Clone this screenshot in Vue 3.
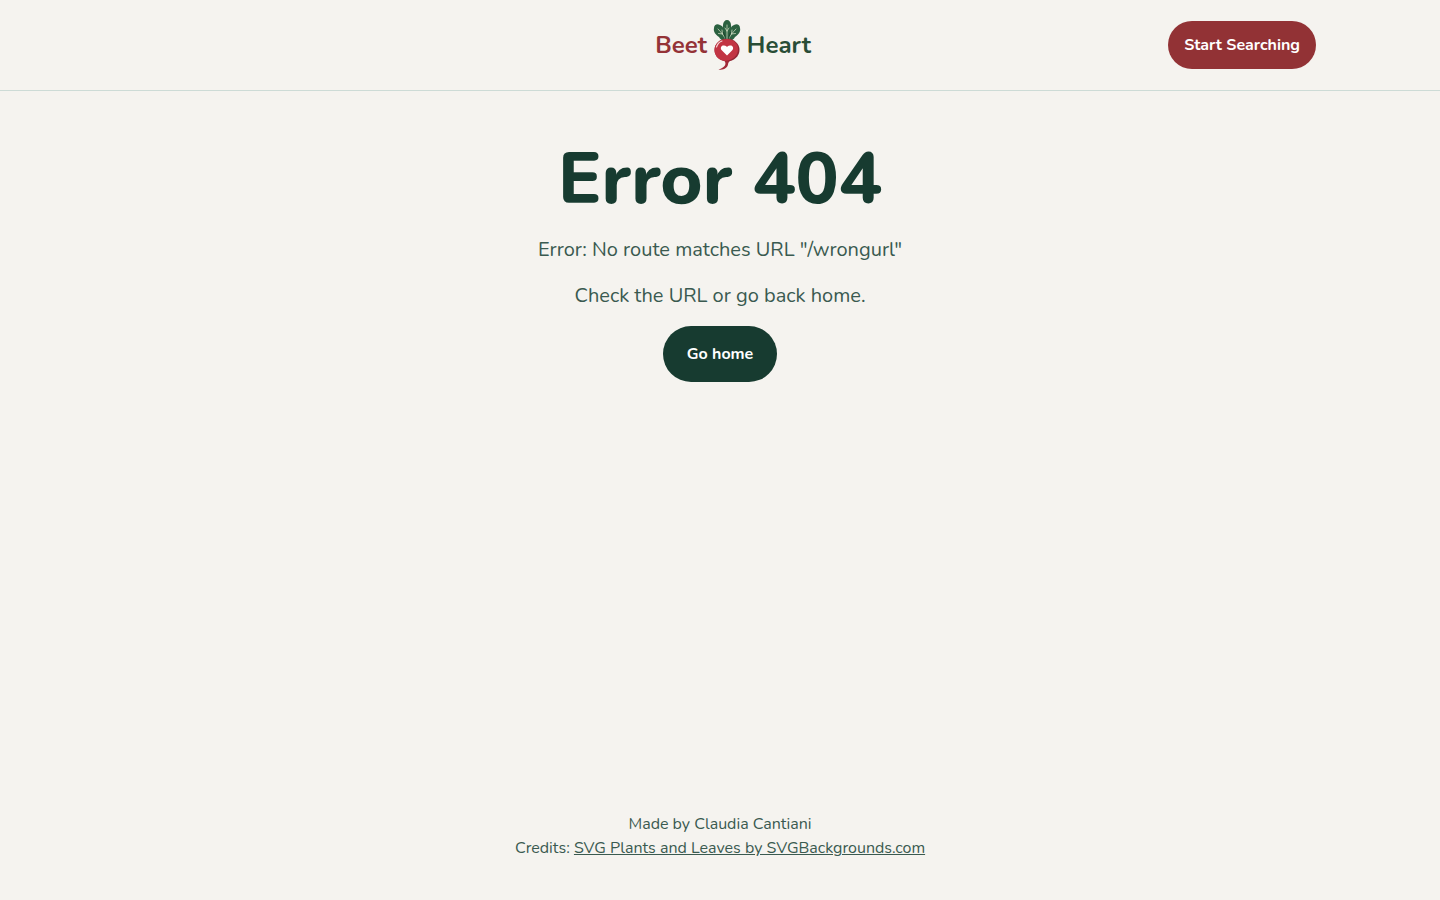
<script setup>
const attemptedPath = '/wrongurl'
</script>

<template>
  <div class="page">
    <header class="header">
      <div class="bar">
        <a class="logo" href="/" aria-label="Beet Heart">
          <span class="beet">Beet</span>
          <svg class="mark" viewBox="0 0 28 50" aria-hidden="true">
            <g fill="#2c6140">
              <path d="M13 21C9 21 7 19 6 17C3 15 0 12 1 8C1 5 4 3 7 5C10 6 11 9 11 11C13 14 14 18 13 21Z" />
              <path d="M15 21C19 21 21 19 22 17C25 15 28 12 27 8C27 5 24 3 21 5C18 6 17 9 17 11C15 14 14 18 15 21Z" />
              <path d="M14 21C11 17 9 12 10 5C10 2 12 0 14 0C16 0 18 2 18 5C19 12 17 17 14 21Z" />
            </g>
            <path d="M14 5V21M14 11L12 8M14 11L16 8M13 20C11 16 9 13 5 9M9.500 14L9 10M9.500 14L5.500 13.500M15 20C17 16 19 13 23 9M18.500 14L19 10M18.500 14L22.500 13.500" fill="none" stroke="#dce5cb" stroke-width=".7" stroke-linecap="round" />
            <path d="M10.500 12C11.500 15 12.500 18 13 21M17.500 12C16.500 15 15.500 18 15 21" fill="none" stroke="#173b28" stroke-width=".8" />
            <path d="M10 40C14 42 13.500 47.500 5.500 49.500C11 50.500 14.500 47.500 15 44.500C15.300 42.500 16 41 19 40Z" fill="#a12a39" />
            <ellipse cx="14" cy="30" rx="12.500" ry="11.200" fill="#922735" />
            <path d="M14 19C20 19 25 23 25 29C25 36 20 40 12 41C5.500 40 1.500 36 1.500 30C1.500 23.500 7 19 14 19Z" fill="#c23443" />
            <path d="M3.500 27C4.500 24 6 22 9 21" fill="none" stroke="#f5d9d8" stroke-width="1.100" stroke-linecap="round" />
            <path d="M14 35.500L9 30.500C6.500 28 8.500 25 11 25.500C13 25.500 14 27 14 27C14 27 15 25.500 17 25.500C19.500 25 21.500 28 19 30.500Z" fill="#fff" />
          </svg>
          <span class="heart">Heart</span>
        </a>
        <a class="button search" href="/search">Start Searching</a>
      </div>
    </header>

    <main class="content">
      <h1>Error 404</h1>
      <p>Error: No route matches URL "{{ attemptedPath }}"</p>
      <p>Check the URL or go back home.</p>
      <a class="button home" href="/">Go home</a>
    </main>

    <footer class="footer">
      <p>Made by Claudia Cantiani</p>
      <p>Credits: <a href="https://www.svgbackgrounds.com/">SVG Plants and Leaves by SVGBackgrounds.com</a></p>
    </footer>
  </div>
</template>

<style>
body {
  margin: 0;
  background: #f5f3ef;
}
</style>

<style scoped>
.page {
  display: flex;
  flex-direction: column;
  min-height: 100vh;
  color: #3a5a50;
  font-family: Nunito, Lato, sans-serif;
  font-size: 16px;
  line-height: 24px;
}

.header {
  border-bottom: 1px solid #cddbd6;
}

.bar {
  display: grid;
  grid-template-columns: 1fr auto 1fr;
  align-items: center;
  max-width: 1192px;
  height: 90px;
  margin: 0 auto;
}

.logo {
  grid-column: 2;
  display: flex;
  align-items: center;
  gap: 6px;
  padding-left: 26px;
  font-size: 24px;
  font-weight: 700;
  text-decoration: none;
}

.beet {
  color: #943337;
}

.heart {
  color: #294d36;
}

.mark {
  width: 28px;
  height: 50px;
}

.button {
  border-radius: 28px;
  color: #fff;
  font-weight: 700;
  text-decoration: none;
}

.search {
  justify-self: end;
  padding: 12px 16px;
  background: #923235;
}

.content {
  display: flex;
  flex: 1;
  flex-direction: column;
  align-items: center;
  gap: 14px;
  padding-top: 47px;
  text-align: center;
}

h1 {
  margin: 0;
  color: #173b30;
  font-size: 72px;
  font-weight: 800;
  line-height: 82px;
}

.content p {
  margin: 0;
  font-size: 20px;
  line-height: 32px;
}

.home {
  padding: 16px 24px;
  background: #173b30;
}

.footer {
  padding-bottom: 40px;
  text-align: center;
}

.footer p {
  margin: 0;
}

.footer a {
  color: inherit;
}
</style>
